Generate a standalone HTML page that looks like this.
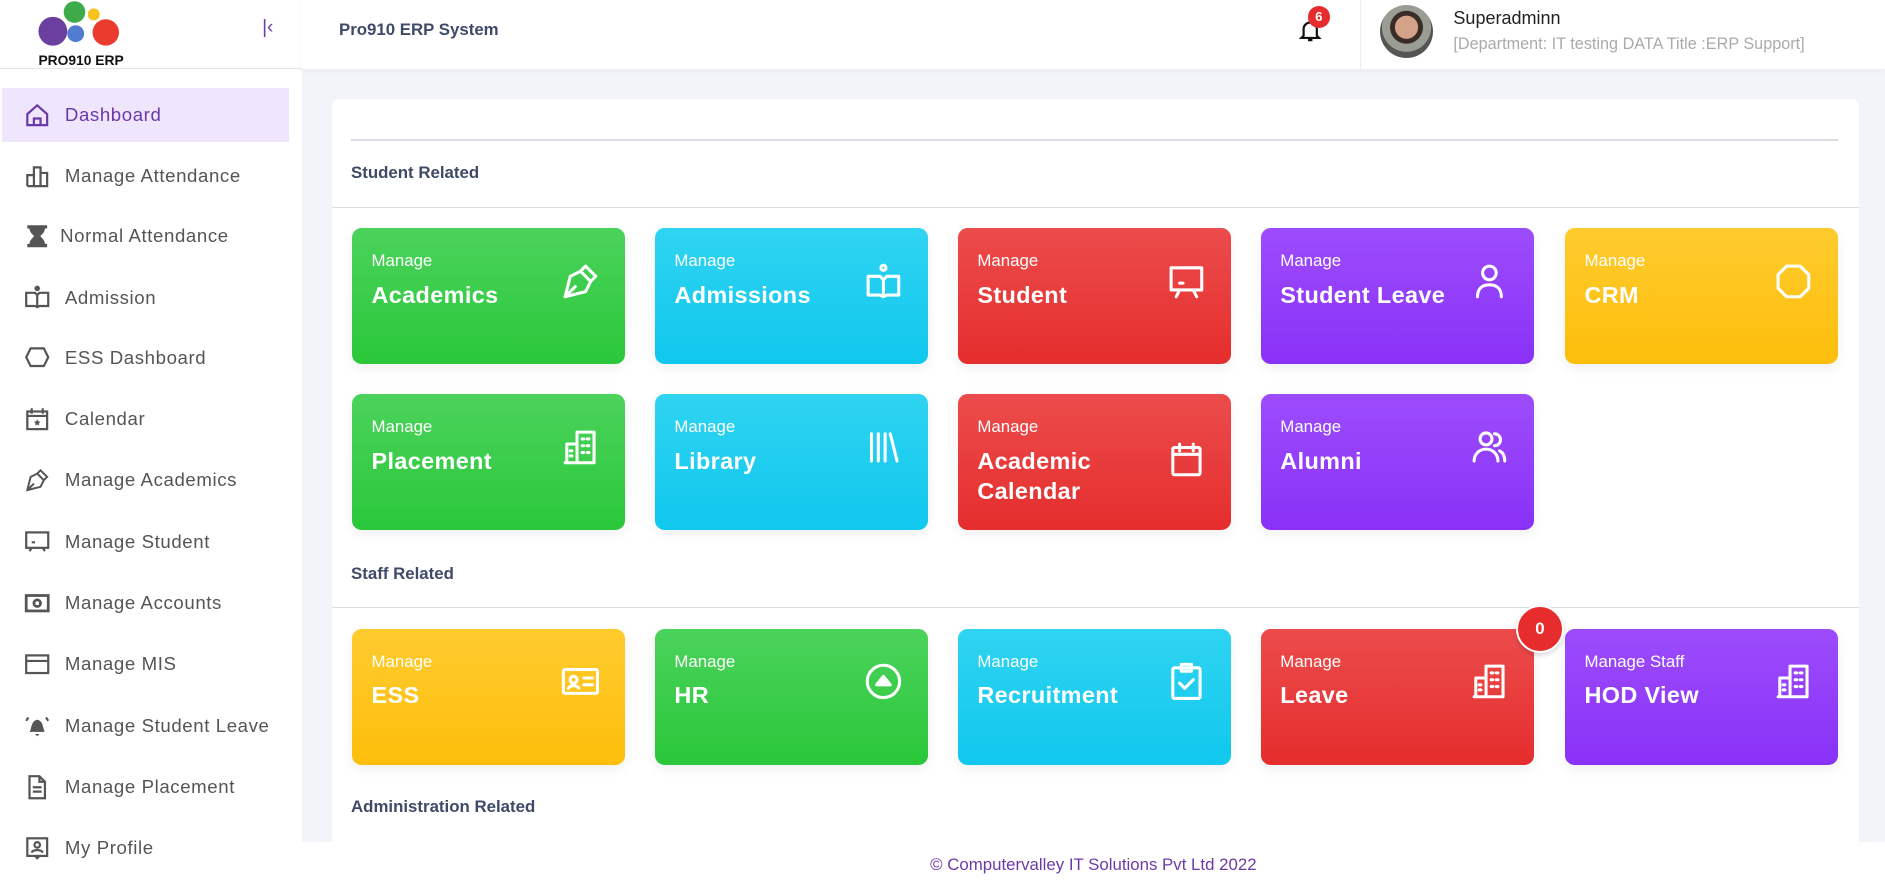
<!DOCTYPE html>
<html><head><meta charset="utf-8"><style>
html{zoom:1.20217}
*{box-sizing:border-box;margin:0;padding:0}
body{width:1568px;height:740px;overflow:hidden;background:#f3f4f9;font-family:"Liberation Sans",sans-serif;position:relative}
.side{position:absolute;left:0;top:0;width:251px;height:740px;background:#fff}
.logo{height:57px;border-bottom:1px solid #e4e4e8;position:relative}
.item{position:absolute;left:2px;width:238px;height:45px;display:flex;align-items:center;font-size:15.5px;color:#555;letter-spacing:.5px}
.item svg{position:absolute;left:18px;width:22px;height:22px}
.item span{position:absolute;left:52px}
.item.act{background:#efe5fd;color:#6b3aa8}
.hdr{position:absolute;left:251px;top:0;right:0;height:57px;background:#fff;box-shadow:0 2px 6px rgba(0,0,0,.04)}
.card{position:absolute;left:276px;top:82px;width:1270px;height:640px;background:#fff;border-radius:6px}
.sec{position:absolute;left:292px;font-size:14px;font-weight:bold;color:#3e4a68}
.line{position:absolute;height:1px;background:#dcdde3}
.tile{position:absolute;width:227px;height:113px;border-radius:8px;color:#fff;box-shadow:0 4px 10px rgba(0,0,0,.06)}
.tile .m{position:absolute;left:16px;top:19px;font-size:14px}
.tile .t{position:absolute;left:16px;top:43px;font-size:19.5px;font-weight:bold;line-height:25px;letter-spacing:.3px}
.tile svg{position:absolute;right:20px;top:27px;width:34px;height:34px;fill:none;stroke:#fff;stroke-width:1.8;stroke-linecap:round;stroke-linejoin:round}
.g{background:linear-gradient(#4bd35b,#2ac73a)}
.c{background:linear-gradient(#2fd4f1,#10c7ed)}
.r{background:linear-gradient(#ec4c4c,#e52d2d)}
.p{background:linear-gradient(#9d4cfc,#8931f7)}
.y{background:linear-gradient(#fecb2e,#fdbe0b)}
.foot{position:absolute;left:251px;right:0;top:700px;height:40px;background:#fff;text-align:center;font-size:14px;color:#6b3aa8;padding-top:11px}
</style></head><body>
<div class="side">
 <div class="logo">
  <svg width="110" height="57" style="position:absolute;left:10px;top:0">
   <circle cx="34" cy="26" r="12" fill="#6b3fa0"/><circle cx="52" cy="10" r="9" fill="#3dab4a"/><circle cx="68" cy="12" r="5" fill="#f6c21b"/><circle cx="53" cy="28" r="7" fill="#4f7bd0"/><circle cx="78" cy="27" r="11" fill="#ea3c2e"/>
   <text x="22" y="54" font-size="11.5" font-weight="bold" font-family="Liberation Sans" fill="#111">PRO910 ERP</text>
  </svg>
  <div style="position:absolute;left:218px;top:14px;color:#6b3aa8;font-size:16px">&#124;&lsaquo;</div>
 </div>
 <div class="item act" style="top:73px"><svg viewBox="0 0 24 24" fill="none" stroke="#6b3aa8" stroke-width="2"><path d="M3 11l9-8 9 8v10H3z"/><path d="M9 21v-6h6v6"/></svg><span>Dashboard</span></div>
 <div class="item" style="top:124px"><svg viewBox="0 0 24 24" fill="none" stroke="#555" stroke-width="2"><path d="M3 21V11h6v10M9 21V4h6v17M15 21V9h6v12H3"/></svg><span>Manage Attendance</span></div>
 <div class="item" style="top:174px"><svg viewBox="0 0 24 24" fill="#555"><path d="M3 2h18v3h-2c0 4-4 6-4 7s4 3 4 7h2v3H3v-3h2c0-4 4-6 4-7S5 9 5 5H3z"/></svg><span style="left:48px">Normal Attendance</span></div>
 <div class="item" style="top:225px"><svg viewBox="0 0 24 24" fill="none" stroke="#555" stroke-width="2"><circle cx="12" cy="4" r="1.5" fill="#555"/><path d="M2 8h8l2 2 2-2h8v12h-8l-2 1-2-1H2zM12 10v11"/></svg><span>Admission</span></div>
 <div class="item" style="top:275px"><svg viewBox="0 0 24 24" fill="none" stroke="#555" stroke-width="2"><path d="M6 4l12 0 4 8-4 8H6l-4-8z"/></svg><span>ESS Dashboard</span></div>
 <div class="item" style="top:326px"><svg viewBox="0 0 24 24" fill="none" stroke="#555" stroke-width="2"><rect x="3" y="5" width="18" height="16"/><path d="M7 2v5M17 2v5M3 9h18"/><path d="M12 12l1 2 2 .3-1.5 1.5.4 2-1.9-1-1.9 1 .4-2L9 14.3l2-.3z" fill="#555" stroke="none"/></svg><span>Calendar</span></div>
 <div class="item" style="top:377px"><svg viewBox="0 0 24 24" fill="none" stroke="#555" stroke-width="1.8"><path d="M15 3l6 6-3 3-6-6zM12 6l-6 3-3 12 12-3 3-6M3 21l6-6"/></svg><span>Manage Academics</span></div>
 <div class="item" style="top:428px"><svg viewBox="0 0 24 24" fill="none" stroke="#555" stroke-width="2"><rect x="2" y="4" width="20" height="14"/><path d="M7 18l-2 3M17 18l2 3M7 13h3"/></svg><span>Manage Student</span></div>
 <div class="item" style="top:479px"><svg viewBox="0 0 24 24" fill="none" stroke="#555" stroke-width="2.5"><rect x="2" y="5" width="20" height="14"/><circle cx="12" cy="12" r="3"/></svg><span>Manage Accounts</span></div>
 <div class="item" style="top:530px"><svg viewBox="0 0 24 24" fill="none" stroke="#555" stroke-width="2"><rect x="2" y="4" width="20" height="16"/><path d="M2 9h20"/></svg><span>Manage MIS</span></div>
 <div class="item" style="top:581px"><svg viewBox="0 0 24 24" fill="#555"><path d="M5 18c2-2 1-10 7-11 6 1 5 9 7 11zM10 20h4l-2 2z"/><path d="M2 8l2-3M22 8l-2-3" stroke="#555" stroke-width="2"/></svg><span>Manage Student Leave</span></div>
 <div class="item" style="top:632px"><svg viewBox="0 0 24 24" fill="none" stroke="#555" stroke-width="2"><path d="M5 2h9l5 5v15H5z"/><path d="M14 2v5h5M8 12h8M8 16h8"/></svg><span>Manage Placement</span></div>
 <div class="item" style="top:683px"><svg viewBox="0 0 24 24" fill="none" stroke="#555" stroke-width="2"><rect x="3" y="3" width="18" height="16"/><circle cx="12" cy="9" r="2.5"/><path d="M7 16c1-3 9-3 10 0M10 19l2 2 2-2"/></svg><span>My Profile</span></div>
</div>
<div class="hdr">
 <div style="position:absolute;left:31px;top:17px;font-size:14px;font-weight:bold;color:#3e4a68">Pro910 ERP System</div>
 <svg style="position:absolute;left:828px;top:14px" width="22" height="22" viewBox="0 0 24 24" fill="none" stroke="#111" stroke-width="2"><path d="M6 17V11a6 6 0 0112 0v6l2 2H4zM10 21h4"/></svg>
 <div style="position:absolute;left:837px;top:5px;width:18px;height:18px;border-radius:50%;background:#e62c2c;color:#fff;font-size:11px;font-weight:bold;text-align:center;line-height:18px">6</div>
 <div style="position:absolute;left:880px;top:0;width:1px;height:57px;background:#eee"></div>
 <div style="position:absolute;left:897px;top:4px;width:44px;height:44px;border-radius:50%;background:radial-gradient(circle at 50% 42%,#d3a289 0 28%,#3a2c26 29% 40%,#9a9d94 41% 60%,#555 61%)"></div>
 <div style="position:absolute;left:958px;top:7px;font-size:15px;color:#222">Superadminn</div>
 <div style="position:absolute;left:958px;top:29px;font-size:13.5px;color:#aaa">[Department: IT testing DATA Title :ERP Support]</div>
</div>
<div class="card"></div>
<div class="line" style="left:292px;top:116px;width:1237px"></div>
<div class="sec" style="top:136px">Student Related</div>
<div class="line" style="left:276px;top:172px;width:1270px"></div>

<div class="tile g" style="left:293px;top:190px"><div class="m">Manage</div><div class="t">Academics</div><svg viewBox="0 0 24 24"><path d="M15 3l6 6-3 3-6-6zM12 6l-6 3-3 12 12-3 3-6M3 21l6-6"/></svg></div>
<div class="tile c" style="left:545px;top:190px"><div class="m">Manage</div><div class="t">Admissions</div><svg viewBox="0 0 24 24"><circle cx="12" cy="4" r="1.5"/><path d="M3 9h7l2 2 2-2h7v11h-7l-2 1-2-1H3zM12 11v10"/></svg></div>
<div class="tile r" style="left:797px;top:190px"><div class="m">Manage</div><div class="t">Student</div><svg viewBox="0 0 24 24"><rect x="3" y="4" width="18" height="13"/><path d="M8 17l-2 4M16 17l2 4M8 13h2"/></svg></div>
<div class="tile p" style="left:1049px;top:190px"><div class="m">Manage</div><div class="t">Student Leave</div><svg viewBox="0 0 24 24"><circle cx="12" cy="7" r="4"/><path d="M5 21c0-5 3-7 7-7s7 2 7 7"/></svg></div>
<div class="tile y" style="left:1302px;top:190px"><div class="m">Manage</div><div class="t">CRM</div><svg viewBox="0 0 24 24"><path d="M8 3h8l5 5v8l-5 5H8l-5-5V8z"/></svg></div>

<div class="tile g" style="left:293px;top:328px"><div class="m">Manage</div><div class="t">Placement</div><svg viewBox="0 0 24 24"><path d="M4 21V10h6M10 21V3h10v18H3M13 7h1M16 7h1M13 11h1M16 11h1M13 15h1M16 15h1M6 14h1M6 17h1"/></svg></div>
<div class="tile c" style="left:545px;top:328px"><div class="m">Manage</div><div class="t">Library</div><svg viewBox="0 0 24 24"><path d="M5 4v16M9 4v16M13 4v16M16 4l4 16"/></svg></div>
<div class="tile r" style="left:797px;top:328px"><div class="m">Manage</div><div class="t">Academic<br>Calendar</div><svg viewBox="0 0 24 24" style="top:37px"><rect x="4" y="5" width="16" height="16" rx="1"/><path d="M8 3v4M16 3v4M4 9h16"/></svg></div>
<div class="tile p" style="left:1049px;top:328px"><div class="m">Manage</div><div class="t">Alumni</div><svg viewBox="0 0 24 24"><circle cx="10" cy="7" r="3.5"/><path d="M3 20c0-4 3-7 7-7s7 3 7 7M15 4a3.5 3.5 0 010 7M18 14c2 1 3 3 3 6"/></svg></div>

<div class="sec" style="top:469px">Staff Related</div>
<div class="line" style="left:276px;top:505px;width:1270px"></div>

<div class="tile y" style="left:293px;top:523px"><div class="m">Manage</div><div class="t">ESS</div><svg viewBox="0 0 24 24"><rect x="2" y="5" width="20" height="14" rx="1"/><circle cx="8" cy="11" r="2"/><path d="M5 16c1-2 5-2 6 0M14 10h5M14 14h5"/></svg></div>
<div class="tile g" style="left:545px;top:523px"><div class="m">Manage</div><div class="t">HR</div><svg viewBox="0 0 24 24"><circle cx="12" cy="12" r="9.5"/><path d="M8 14l4-5 4 5z" fill="#fff"/></svg></div>
<div class="tile c" style="left:797px;top:523px"><div class="m">Manage</div><div class="t">Recruitment</div><svg viewBox="0 0 24 24"><rect x="4" y="4" width="16" height="18" rx="1"/><path d="M9 2h6v4H9zM8 13l3 3 5-5"/></svg></div>
<div class="tile r" style="left:1049px;top:523px"><div class="m">Manage</div><div class="t">Leave</div><svg viewBox="0 0 24 24"><path d="M4 21V10h6M10 21V3h10v18H3M13 7h1M16 7h1M13 11h1M16 11h1M13 15h1M16 15h1M6 14h1M6 17h1"/></svg></div>
<div class="tile p" style="left:1302px;top:523px"><div class="m">Manage Staff</div><div class="t">HOD View</div><svg viewBox="0 0 24 24"><path d="M4 21V10h6M10 21V3h10v18H3M13 7h1M16 7h1M13 11h1M16 11h1M13 15h1M16 15h1M6 14h1M6 17h1"/></svg></div>
<div style="position:absolute;left:1261px;top:503px;width:40px;height:40px;border-radius:50%;background:#e62c2c;border:2px solid #fff;color:#fff;font-weight:bold;font-size:14px;text-align:center;line-height:36px;box-shadow:0 2px 4px rgba(0,0,0,.15)">0</div>

<div class="sec" style="top:663px">Administration Related</div>
<div class="foot">© Computervalley IT Solutions Pvt Ltd 2022</div>
</body></html>
